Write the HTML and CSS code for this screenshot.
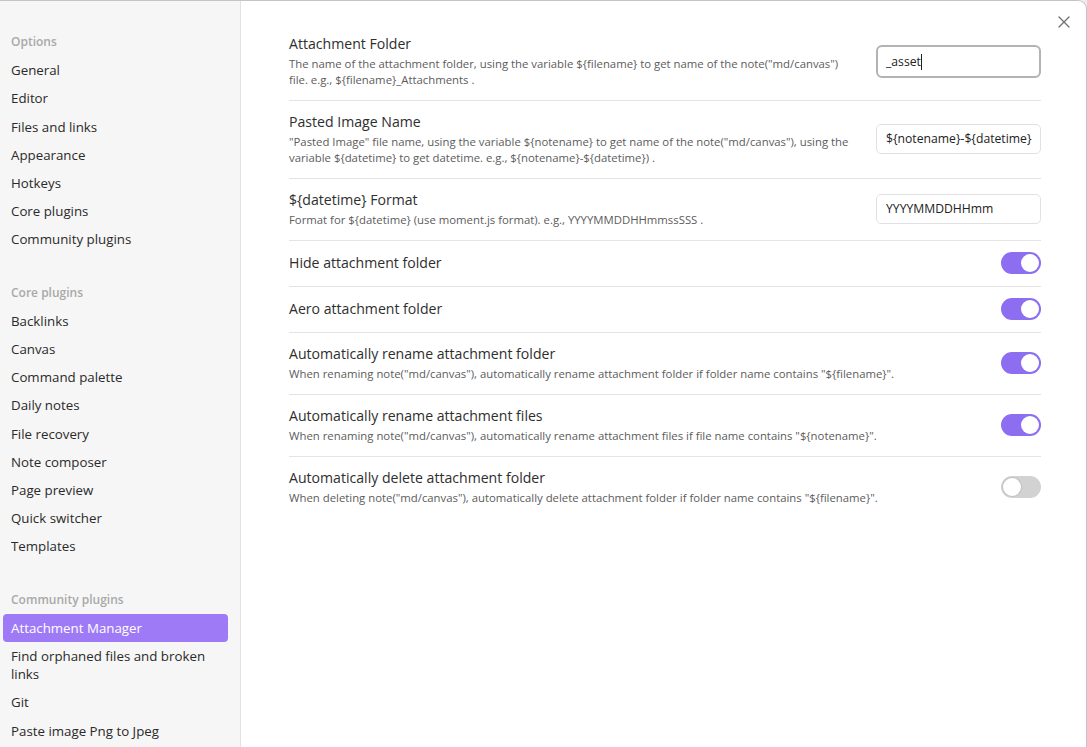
FILE: index.html
```html
<!DOCTYPE html>
<html>
<head>
<meta charset="utf-8">
<link rel="stylesheet" href="styles.css">
</head>
<body>
<div class="modal">
  <nav class="sidebar">
    <div class="group">
      <div class="group-title">Options</div>
      <div class="nav-item">General</div>
      <div class="nav-item">Editor</div>
      <div class="nav-item">Files and links</div>
      <div class="nav-item">Appearance</div>
      <div class="nav-item">Hotkeys</div>
      <div class="nav-item">Core plugins</div>
      <div class="nav-item">Community plugins</div>
    </div>
    <div class="group">
      <div class="group-title">Core plugins</div>
      <div class="nav-item">Backlinks</div>
      <div class="nav-item">Canvas</div>
      <div class="nav-item">Command palette</div>
      <div class="nav-item">Daily notes</div>
      <div class="nav-item">File recovery</div>
      <div class="nav-item">Note composer</div>
      <div class="nav-item">Page preview</div>
      <div class="nav-item">Quick switcher</div>
      <div class="nav-item">Templates</div>
    </div>
    <div class="group">
      <div class="group-title">Community plugins</div>
      <div class="nav-item active">Attachment Manager</div>
      <div class="nav-item">Find orphaned files and broken links</div>
      <div class="nav-item">Git</div>
      <div class="nav-item">Paste image Png to Jpeg</div>
    </div>
  </nav>
  <main class="content">
    <div class="close">
      <svg width="12" height="12" viewBox="0 0 12 12"><path d="M1 1L11 11M11 1L1 11" stroke="#6f6f6f" stroke-width="1.3" fill="none" stroke-linecap="round"/></svg>
    </div>
    <div class="setting first">
      <div class="info">
        <div class="name">Attachment Folder</div>
        <div class="desc">The name of the attachment folder, using the variable ${filename} to get name of the note("md/canvas") file. e.g., ${filename}_Attachments .</div>
      </div>
      <div class="control"><div class="text-input focused">_asset<span class="caret"></span></div></div>
    </div>
    <div class="setting">
      <div class="info">
        <div class="name">Pasted Image Name</div>
        <div class="desc">"Pasted Image" file name, using the variable ${notename} to get name of the note("md/canvas"), using the variable ${datetime} to get datetime. e.g., ${notename}-${datetime}) .</div>
      </div>
      <div class="control"><div class="text-input">${notename}-${datetime}</div></div>
    </div>
    <div class="setting">
      <div class="info">
        <div class="name">${datetime} Format</div>
        <div class="desc">Format for ${datetime} (use moment.js format). e.g., YYYYMMDDHHmmssSSS .</div>
      </div>
      <div class="control"><div class="text-input">YYYYMMDDHHmm</div></div>
    </div>
    <div class="setting">
      <div class="info">
        <div class="name">Hide attachment folder</div>
      </div>
      <div class="control"><div class="toggle on"><span class="knob"></span></div></div>
    </div>
    <div class="setting">
      <div class="info">
        <div class="name">Aero attachment folder</div>
      </div>
      <div class="control"><div class="toggle on"><span class="knob"></span></div></div>
    </div>
    <div class="setting">
      <div class="info">
        <div class="name">Automatically rename attachment folder</div>
        <div class="desc">When renaming note("md/canvas"), automatically rename attachment folder if folder name contains "${filename}".</div>
      </div>
      <div class="control"><div class="toggle on"><span class="knob"></span></div></div>
    </div>
    <div class="setting">
      <div class="info">
        <div class="name">Automatically rename attachment files</div>
        <div class="desc">When renaming note("md/canvas"), automatically rename attachment files if file name contains "${notename}".</div>
      </div>
      <div class="control"><div class="toggle on"><span class="knob"></span></div></div>
    </div>
    <div class="setting">
      <div class="info">
        <div class="name">Automatically delete attachment folder</div>
        <div class="desc">When deleting note("md/canvas"), automatically delete attachment folder if folder name contains "${filename}".</div>
      </div>
      <div class="control"><div class="toggle"><span class="knob"></span></div></div>
    </div>
  </main>
</div>
</body>
</html>
```

FILE: styles.css
```css
html, body {
  margin: 0;
  padding: 0;
  height: 100%;
  background: #ececec;
  font-family: "Open Sans", "Noto Sans", sans-serif;
  color: #222;
}
.modal {
  display: flex;
  height: 747px;
  box-sizing: border-box;
  background: #fff;
  border-top: 1px solid #c4c4c4;
  border-right: 1px solid #c4c4c4;
  border-top-right-radius: 9px;
  overflow: hidden;
}
.sidebar {
  flex: none;
  background: #f6f6f6;
  border-right: 1px solid #e2e2e2;
  padding: 27px 12px 0 3px;
  width: 225px;
}
.group {
  margin-bottom: 25px;
}
.group-title {
  font-size: 12px;
  font-weight: 600;
  color: #a9a9a9;
  padding: 5px 8px;
  line-height: 18.2px;
}
.nav-item {
  font-size: 13.3px;
  padding: 5px 8px;
  line-height: 18.2px;
  color: #2a2a2a;
  border-radius: 4px;
}
.nav-item.active {
  background: #9f7af7;
  color: #fff;
}
.content {
  flex: 1;
  position: relative;
  padding: 22px 45px 0 48px;
}
.close {
  position: absolute;
  top: 15px;
  right: 16px;
  width: 12px;
  height: 12px;
  display: flex;
}
.setting {
  display: flex;
  align-items: center;
  padding: 11px 0 12px;
  border-top: 1px solid #e4e4e4;
}
.setting.first {
  border-top: none;
}
.info {
  flex: 1;
  margin-right: 20px;
}
.name {
  font-size: 14.1px;
  line-height: 20px;
  color: #2e2e2e;
}
.desc {
  font-size: 11.35px;
  line-height: 16px;
  color: #5c5c5c;
  padding-top: 2px;
}
.control {
  flex: none;
  display: flex;
  justify-content: flex-end;
}
.text-input {
  width: 165px;
  height: 30px;
  box-sizing: border-box;
  border: 1px solid #e1e1e1;
  border-radius: 5px;
  padding: 0 9px;
  font-size: 12.2px;
  line-height: 28px;
  color: #222;
  white-space: nowrap;
  overflow: hidden;
}
.text-input.focused {
  height: 33px;
  border: 2px solid #b3b3b3;
  border-radius: 6px;
  line-height: 29px;
  padding-left: 8px;
}
.caret {
  display: inline-block;
  width: 1px;
  height: 16px;
  background: #222;
  vertical-align: middle;
}
.toggle {
  width: 40px;
  height: 22px;
  border-radius: 11px;
  background: #d2d2d2;
  position: relative;
}
.toggle.on {
  background: #8d6ef1;
}
.knob {
  position: absolute;
  top: 2px;
  left: 2px;
  width: 18px;
  height: 18px;
  border-radius: 50%;
  background: #fff;
  box-shadow: 0 0 0 1px rgba(0,0,0,0.08);
}
.toggle.on .knob {
  left: 20px;
  box-shadow: none;
}
```
